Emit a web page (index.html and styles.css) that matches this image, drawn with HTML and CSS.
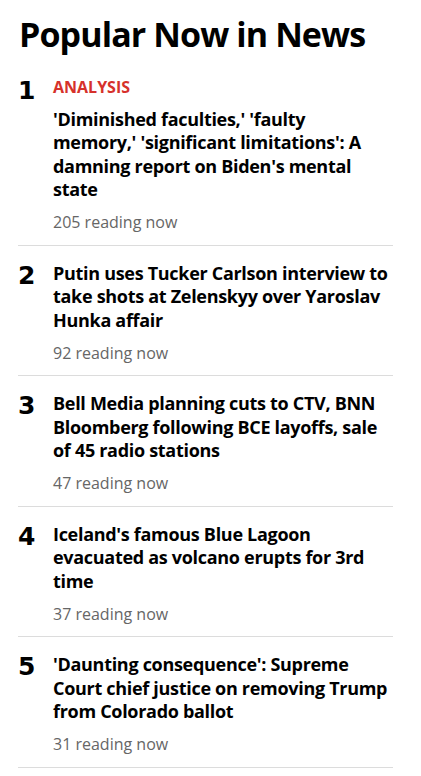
FILE: index.html
```html
<!DOCTYPE html>
<html lang="en">
<head>
    <meta charset="UTF-8">
    <meta name="viewport" content="width=device-width, initial-scale=1.0">
    <title>Popular Now in News</title>
    <link rel="stylesheet" href="styles.css">
</head>
<body>
    <div class="popular">
        <h2 class="popular-title">Popular Now in News</h2>
        <ol class="popular-list">
            <li class="popular-item">
                <span class="rank">1</span>
                <div class="story">
                    <span class="label">Analysis</span>
                    <a class="headline" href="#">'Diminished faculties,' 'faulty memory,' 'significant limitations': A damning report on Biden's mental state</a>
                    <span class="readers">205 reading now</span>
                </div>
            </li>
            <li class="popular-item">
                <span class="rank">2</span>
                <div class="story">
                    <a class="headline" href="#">Putin uses Tucker Carlson interview to take shots at Zelenskyy over Yaroslav Hunka affair</a>
                    <span class="readers">92 reading now</span>
                </div>
            </li>
            <li class="popular-item">
                <span class="rank">3</span>
                <div class="story">
                    <a class="headline" href="#">Bell Media planning cuts to CTV, BNN Bloomberg following BCE layoffs, sale of 45 radio stations</a>
                    <span class="readers">47 reading now</span>
                </div>
            </li>
            <li class="popular-item">
                <span class="rank">4</span>
                <div class="story">
                    <a class="headline" href="#">Iceland's famous Blue Lagoon evacuated as volcano erupts for 3rd time</a>
                    <span class="readers">37 reading now</span>
                </div>
            </li>
            <li class="popular-item">
                <span class="rank">5</span>
                <div class="story">
                    <a class="headline" href="#">'Daunting consequence': Supreme Court chief justice on removing Trump from Colorado ballot</a>
                    <span class="readers">31 reading now</span>
                </div>
            </li>
        </ol>
    </div>
</body>
</html>
```

FILE: styles.css
```css
html{
    font-family: 'Open Sans', 'Noto Sans', Arial, sans-serif;
    background: #fff;
    color: #000;
}

body{
    margin: 0;
}

.popular{
    width: 375px;
    padding: 0 18px;
}

.popular-title{
    font-size: 34px;
    line-height: 1.2;
    font-weight: 700;
    letter-spacing: -0.9px;
    margin: 14px 0 6px 1px;
}

.popular-list{
    list-style: none;
    margin: 0;
    padding: 0;
}

.popular-item{
    display: flex;
    padding: 16px 0 12px;
    border-bottom: 1px solid #dcdcdc;
}

.rank{
    flex: 0 0 35px;
    font-family: 'DejaVu Sans', Verdana, sans-serif;
    font-weight: 700;
    font-size: 25px;
    line-height: 1;
    margin-top: 1px;
}

.story{
    display: flex;
    flex-direction: column;
    gap: 10.5px;
    padding-right: 3px;
}

.label{
    font-size: 16px;
    line-height: 1.3;
    font-weight: 700;
    text-transform: uppercase;
    color: #d6312b;
}

.headline{
    font-size: 18px;
    line-height: 1.3;
    font-weight: 700;
    letter-spacing: -0.3px;
    color: #000;
    text-decoration: none;
}

.readers{
    font-size: 16px;
    line-height: 1.3;
    color: #666;
}
```
